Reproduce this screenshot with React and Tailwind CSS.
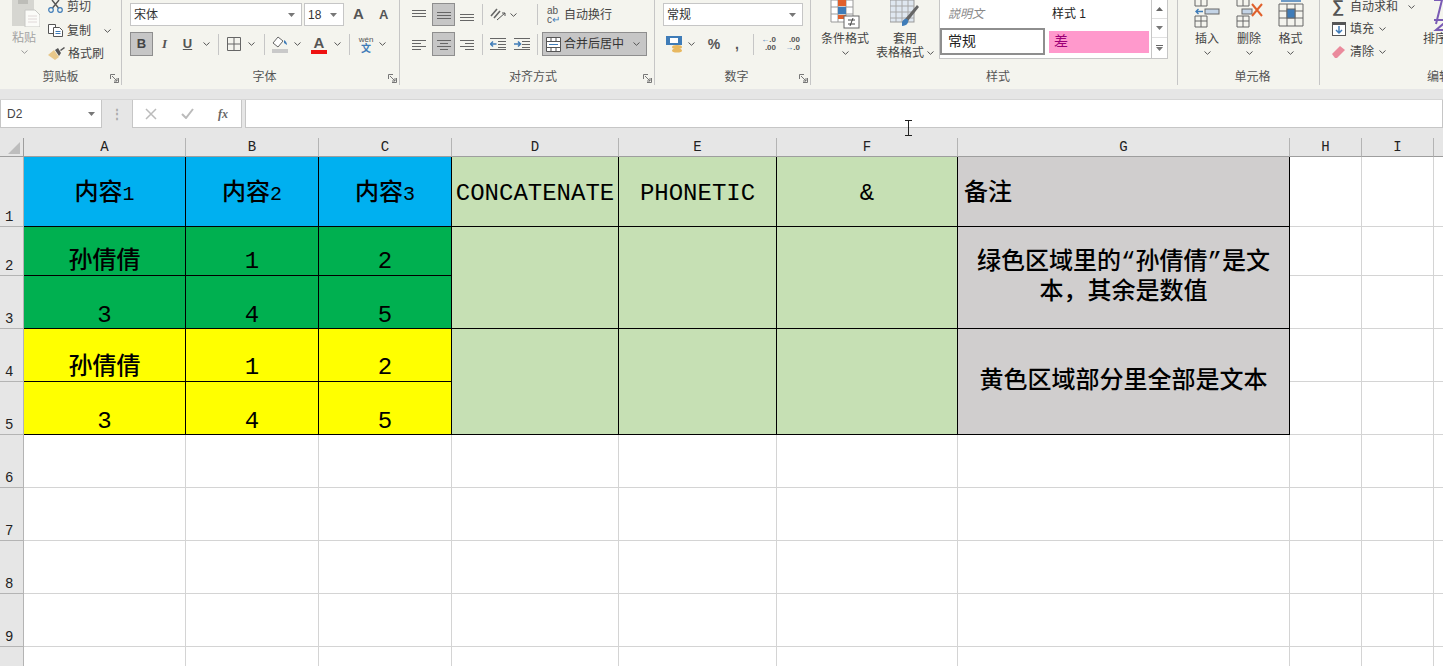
import React from "react";

// small drawn ribbon icons
const Chev = ({ c = "#555" }) => (
  <svg width="7" height="4" viewBox="0 0 7 4" fill="none"><path d="M.5.5 3.5 3.3 6.5.5" stroke={c} /></svg>
);
const Drop = () => (
  <svg width="7" height="4" viewBox="0 0 7 4"><path d="M0 0h7L3.5 4z" fill="#777" /></svg>
);
const Launcher = () => (
  <svg width="9" height="9" viewBox="0 0 9 9" fill="none" stroke="#777"><path d="M.5 5V.5H5M8.5 4v4.5H4M2 2l5 5M7 4v3H4" /></svg>
);
const Sep = () => <div className="w-px h-[21px] bg-[#c6c6c6] shrink-0" />;
const Lines = ({ rows }) => (
  <svg width="14" height="12" viewBox="0 0 14 12" stroke="#666" fill="none">
    {rows.map((r, i) => <path key={i} d={`M${r[0]} ${r[1]}.5H${r[2]}`} />)}
  </svg>
);

const Paste = () => (
  <svg width="28" height="27" viewBox="0 0 28 27">
    <rect x="0" y="0" width="22" height="26" fill="#d6d6d1" />
    <rect x="6" y="0" width="10" height="4" fill="#bdbdb8" />
    <path d="M13 10h10l5 5v12H13z" fill="#fbfbf8" stroke="#c8c8c4" />
    <path d="M16 16h9M16 19h9M16 22h9" stroke="#e0d8d8" />
  </svg>
);
const Scissors = () => (
  <svg width="15" height="13" viewBox="0 0 15 13" fill="none">
    <path d="M4.5 8 11 0M10.5 8 4 0" stroke="#555" strokeWidth="1.4" />
    <circle cx="3" cy="10" r="2.3" stroke="#3f7cb8" strokeWidth="1.2" />
    <circle cx="12" cy="10" r="2.3" stroke="#3f7cb8" strokeWidth="1.2" />
  </svg>
);
const CopyIcon = () => (
  <svg width="15" height="13" viewBox="0 0 15 13" fill="#fff" stroke="#555">
    <path d="M.5.5h7v9h-7z" />
    <path d="M5.5 3.5h6l3 3v6h-9z" />
    <path d="M7.5 7.5h5M7.5 9.5h5" stroke="#3f7cb8" />
  </svg>
);
const Brush = () => (
  <svg width="17" height="14" viewBox="0 0 17 14">
    <path d="M0 8 6 3l5 7-4 3z" fill="#e8c88a" />
    <path d="M7 3 10 1l3 5-2 3z" fill="#555" />
    <path d="M12 3l4-3 1 1-4 3z" fill="#555" />
  </svg>
);
const BorderIcon = () => (
  <svg width="14" height="14" viewBox="0 0 14 14" fill="none" stroke="#666"><path d="M.5.5h13v13H.5zM7 .5v13M.5 7h13" /></svg>
);
const FillIcon = () => (
  <svg width="17" height="17" viewBox="0 0 17 17">
    <path d="M6 1 1 7l5 4 5-6z" fill="#fff" stroke="#666" />
    <path d="M12 4c2 1 3 3 3 5l-3-2z" fill="#3f7cb8" />
    <rect x="0" y="13" width="16" height="4" fill="#c9c9c9" />
  </svg>
);
const ColorA = () => (
  <div className="flex flex-col items-center">
    <span className="text-[15px] leading-[15px] font-bold text-[#555]">A</span>
    <div className="w-[16px] h-[4px] bg-[#ee1111]" />
  </div>
);
const Wen = () => (
  <div className="flex flex-col items-center leading-none">
    <span className="text-[8px] leading-[9px] text-[#555]">wén</span>
    <span className="text-[10px] leading-[10px] text-[#3f7cb8] font-bold">文</span>
  </div>
);
const Orient = () => (
  <svg width="16" height="14" viewBox="0 0 16 14" fill="none" stroke="#666">
    <path d="M1 8 7 1M4 10l6-7" strokeWidth="1.6" />
    <path d="M7 12 15 5M15 5h-3M15 5v3" stroke="#555" />
  </svg>
);
const Indent = ({ flip }) => (
  <svg width="16" height="12" viewBox="0 0 16 12" fill="none">
    <path d="M0 .5h16M8 3.5h8M8 6.5h8M8 9.5h8M0 11.5h16" stroke="#666" />
    <path d={flip ? "M0 6h6M4 3.5 6.5 6 4 8.5" : "M6.5 6h-6M3 3.5.5 6 3 8.5"} stroke="#3f7cb8" strokeWidth="1.5" />
  </svg>
);
const Wrap = () => (
  <div className="flex flex-col leading-none text-[#555] w-[13px]">
    <span className="text-[10px] leading-[9px]">ab</span>
    <span className="text-[10px] leading-[9px]">c<span className="text-[#3f7cb8]">↵</span></span>
  </div>
);
const MergeIcon = () => (
  <svg width="15" height="15" viewBox="0 0 15 15" fill="#fff" stroke="#555">
    <path d="M.5.5h14v14H.5zM.5 4.5h14M.5 10.5h14M5 .5v4M10 .5v4M5 10.5v4M10 10.5v4" />
    <path d="M3 7.5h9" stroke="#3f7cb8" />
  </svg>
);
const Currency = () => (
  <svg width="17" height="17" viewBox="0 0 17 17">
    <rect x="0" y="0" width="16" height="9" fill="#3f7cb8" />
    <rect x="4" y="2" width="8" height="5" fill="#fff" />
    <ellipse cx="11" cy="11" rx="5" ry="2" fill="#e8b860" />
    <ellipse cx="11" cy="14.5" rx="5" ry="2" fill="#e8b860" />
  </svg>
);
const Decimal = ({ inc }) => (
  <div className="w-[16px] flex flex-col items-end text-[8px] leading-[8px] text-[#555] font-bold">
    <span>{inc ? <><span className="text-[#3f7cb8]">←</span>.0</> : ".00"}</span>
    <span>{inc ? ".00" : <><span className="text-[#3f7cb8]">→</span>.0</>}</span>
  </div>
);
const CondFormat = () => (
  <svg width="30" height="29" viewBox="0 0 30 29">
    <path d="M1 0h22v22H1z" fill="#fff" stroke="#999" />
    <path d="M8 0v22M16 0v22M1 7h22M1 14h22" stroke="#999" />
    <rect x="8" y="0" width="8" height="6" fill="#e0602c" />
    <rect x="8" y="7" width="8" height="7" fill="#3f7cb8" />
    <rect x="8" y="15" width="8" height="4" fill="#e0602c" />
    <rect x="14" y="16" width="15" height="12" fill="#fff" stroke="#666" />
    <path d="M18 20h7M18 24h7M20 26l3-8" stroke="#444" />
  </svg>
);
const TableFormat = () => (
  <svg width="30" height="30" viewBox="0 0 30 30">
    <rect x="0" y="0" width="24" height="22" fill="#dfe7f0" stroke="#999" />
    <path d="M6 0v22M12 0v22M18 0v22M0 6h24M0 12h24M0 18h24" stroke="#a8a8a8" />
    <path d="M29 7 18 21l-3-2L27 5z" fill="#666" />
    <path d="M12 22c2-4 5-4 6-2s-1 6-6 6z" fill="#3f7cb8" />
  </svg>
);
const InsertIcon = () => (
  <svg width="26" height="28" viewBox="0 0 26 28" fill="none" stroke="#666">
    <path d="M1 0v6h12V0M7 0v6M1 16h12v11H1zM7 16v11M1 21h12" />
    <rect x="11" y="9" width="14" height="5" fill="#c4d4e6" />
    <path d="M9 11.5H2M4.500 9 2 11.500 4.500 14" stroke="#3f7cb8" strokeWidth="1.400" />
  </svg>
);
const DeleteIcon = () => (
  <svg width="30" height="28" viewBox="0 0 30 28" fill="none" stroke="#666">
    <path d="M3 0v6h12V0M9 0v6M3 16h12v11H3zM9 16v11M3 21h12" />
    <rect x="8" y="9" width="10" height="5" fill="#c4d4e6" />
    <path d="M18 4l10 12M28 4 18 16" stroke="#e0602c" strokeWidth="2" />
  </svg>
);
const FormatIcon = () => (
  <svg width="26" height="28" viewBox="0 0 26 28" fill="none" stroke="#666">
    <path d="M1 4h24v22H1zM9 4v22M17 4v22M1 11h24M1 18h24" />
    <rect x="9" y="9" width="8" height="9" fill="#3f7cb8" />
    <path d="M3 1h20" stroke="#3f7cb8" strokeWidth="1.500" />
  </svg>
);
const FillDown = () => (
  <svg width="14" height="14" viewBox="0 0 14 14">
    <rect x=".5" y=".5" width="13" height="13" fill="#fff" stroke="#555" />
    <rect x="0" y="0" width="14" height="3" fill="#555" />
    <path d="M7 4v7M4 8l3 3 3-3" stroke="#3f7cb8" strokeWidth="1.500" fill="none" />
  </svg>
);
const Eraser = () => (
  <svg width="14" height="14" viewBox="0 0 14 14"><path d="M0 9 8 1l5 4-8 8H3z" fill="#ea8a9c" /></svg>
);

const Group = ({ className, label, launcher, children }) => (
  <div className={`shrink-0 h-[85px] flex flex-col border-r border-[#c6c6c6] ${className}`}>
    <div className="h-[69px]">{children}</div>
    <div className="h-[16px] relative flex items-center justify-center text-[12px] leading-none text-[#555]">
      {label}
      {launcher && <span className="absolute right-[2px] top-[5px] flex"><Launcher /></span>}
    </div>
  </div>
);

const BigButton = ({ className, icon, lines }) => (
  <div className={`shrink-0 flex flex-col items-center text-[12px] text-[#444] ${className}`}>
    <div className="h-[32px] flex items-start justify-center">{icon}</div>
    {lines}
  </div>
);
const ChevRow = () => <div className="h-[14px] flex items-center justify-center"><Chev /></div>;

const Clipboard = () => (
  <Group className="w-[122px]" label="剪贴板" launcher>
    <div className="flex">
      <div className="w-[48px] pl-[12px] flex flex-col text-[12px] text-[#a3a3a3]">
        <Paste />
        <span className="mt-[3px] leading-[16px]">粘贴</span>
        <div className="mt-[4px] pl-[9px] flex"><Chev c="#999" /></div>
      </div>
      <div className="flex flex-col text-[12px] text-[#444]">
        <div className="h-[13px] flex items-center gap-[4px]"><Scissors /><span className="ml-[0px]">剪切</span></div>
        <div className="mt-[11px] h-[13px] flex items-center gap-[4px]"><CopyIcon /><span>复制</span><span className="ml-[9px] flex"><Chev /></span></div>
        <div className="mt-[10px] h-[14px] flex items-center gap-[3px]"><Brush /><span>格式刷</span></div>
      </div>
    </div>
  </Group>
);

const Font = () => (
  <Group className="w-[278px] pl-[8px]" label="字体" launcher>
    <div className="pt-[3px] flex items-center h-[26px]">
      <div className="w-[172px] h-[23px] bg-white border border-[#c6c6c6] flex items-center justify-between pl-[3px] pr-[6px] text-[12px] text-[#333]">宋体<Drop /></div>
      <div className="ml-[2px] w-[40px] h-[23px] bg-white border border-[#c6c6c6] flex items-center justify-between pl-[3px] pr-[6px] text-[12px] text-[#333]">18<Drop /></div>
      <span className="ml-[9px] w-[14px] text-[15px] text-[#555] font-bold">A</span>
      <span className="ml-[12px] w-[13px] text-[13px] text-[#555] font-bold">A</span>
    </div>
    <div className="mt-[6px] flex items-center h-[24px]">
      <div className="w-[23px] h-[24px] bg-[#c6c6c6] border border-[#8e8e8e] flex items-center justify-center text-[13px] font-bold text-[#444]">B</div>
      <div className="w-[23px] text-center text-[13px] italic font-bold [font-family:'Liberation_Serif',serif] text-[#555]">I</div>
      <div className="w-[23px] text-center text-[13px] font-bold text-[#555] underline">U</div>
      <div className="w-[15px] flex justify-center"><Chev /></div>
      <div className="ml-[4px] flex"><Sep /></div>
      <div className="ml-[8px] flex"><BorderIcon /></div>
      <div className="ml-[3px] w-[14px] flex justify-center"><Chev /></div>
      <div className="ml-[6px] flex"><Sep /></div>
      <div className="ml-[7px] flex"><FillIcon /></div>
      <div className="ml-[1px] w-[14px] flex justify-center"><Chev /></div>
      <div className="ml-[6px] w-[18px] flex justify-center"><ColorA /></div>
      <div className="ml-[2px] w-[14px] flex justify-center"><Chev /></div>
      <div className="ml-[5px] flex"><Sep /></div>
      <div className="ml-[7px] w-[18px] flex justify-center"><Wen /></div>
      <div className="w-[14px] flex justify-center"><Chev /></div>
    </div>
  </Group>
);

const Align = () => (
  <Group className="w-[255px] pl-[12px]" label="对齐方式" launcher>
    <div className="pt-[3px] flex items-center h-[26px]">
      <div className="w-[14px] flex"><Lines rows={[[0, 1, 14], [0, 4, 14], [0, 7, 14]]} /></div>
      <div className="ml-[6px] w-[23px] h-[23px] bg-[#c6c6c6] border border-[#8e8e8e] flex items-center justify-center"><Lines rows={[[0, 3, 14], [0, 6, 14], [0, 9, 14]]} /></div>
      <div className="ml-[5px] w-[14px] flex"><Lines rows={[[0, 5, 14], [0, 8, 14], [0, 11, 14]]} /></div>
      <div className="ml-[8px] flex"><Sep /></div>
      <div className="ml-[7px] flex"><Orient /></div>
      <div className="w-[14px] flex justify-center"><Chev /></div>
      <div className="ml-[17px] flex"><Sep /></div>
      <div className="ml-[9px] flex"><Wrap /></div>
      <span className="ml-[4px] text-[12px] text-[#444]">自动换行</span>
    </div>
    <div className="mt-[6px] flex items-center h-[24px]">
      <div className="w-[14px] flex"><Lines rows={[[0, 2, 14], [0, 5, 9], [0, 8, 14], [0, 11, 9]]} /></div>
      <div className="ml-[6px] w-[23px] h-[24px] bg-[#c6c6c6] border border-[#8e8e8e] flex items-center justify-center"><Lines rows={[[0, 2, 14], [3, 5, 11], [0, 8, 14], [3, 11, 11]]} /></div>
      <div className="ml-[5px] w-[14px] flex"><Lines rows={[[0, 2, 14], [5, 5, 14], [0, 8, 14], [5, 11, 14]]} /></div>
      <div className="ml-[8px] flex"><Sep /></div>
      <div className="ml-[7px] flex"><Indent /></div>
      <div className="ml-[8px] flex"><Indent flip /></div>
      <div className="ml-[7px] flex"><Sep /></div>
      <div className="ml-[4px] w-[105px] h-[24px] bg-[#c6c6c6] border border-[#8e8e8e] flex items-center pl-[3px] text-[12px] text-[#333]">
        <MergeIcon />
        <span className="ml-[3px]">合并后居中</span>
        <span className="ml-[9px] flex"><Chev /></span>
      </div>
    </div>
  </Group>
);

const NumberGroup = () => (
  <Group className="w-[156px] pl-[8px]" label="数字" launcher>
    <div className="pt-[3px] flex items-center h-[26px]">
      <div className="w-[140px] h-[23px] bg-white border border-[#c6c6c6] flex items-center justify-between pl-[3px] pr-[6px] text-[12px] text-[#333]">常规<Drop /></div>
    </div>
    <div className="mt-[6px] pl-[3px] flex items-center h-[24px]">
      <Currency />
      <div className="ml-[1px] w-[14px] flex justify-center"><Chev /></div>
      <span className="ml-[9px] w-[14px] text-[14px] font-bold text-[#555] text-center">%</span>
      <span className="ml-[10px] w-[12px] text-[14px] font-bold text-[#555] text-center">,</span>
      <div className="ml-[10px] flex"><Sep /></div>
      <div className="ml-[6px] flex"><Decimal inc /></div>
      <div className="ml-[8px] flex"><Decimal /></div>
    </div>
  </Group>
);

const Styles = () => (
  <Group className="w-[367px] pl-[8px]" label="样式">
    <div className="flex">
      <BigButton className="w-[52px] leading-[14px]" icon={<CondFormat />} lines={<><span>条件格式</span><ChevRow /></>} />
      <BigButton className="ml-[1px] w-[66px] leading-[14px]" icon={<TableFormat />} lines={
        <><span>套用</span><span className="flex items-center gap-[3px] whitespace-nowrap">表格格式<Chev /></span></>
      } />
      <div className="ml-[1px] w-[229px] h-[59px] bg-white border-x border-b border-[#c6c6c6] flex text-[12px]">
        <div className="w-[212px] flex flex-col">
          <div className="h-[28px] flex items-center">
            <span className="pl-[8px] w-[112px] italic text-[#888]">説明文</span>
            <span className="text-[#222]">样式 1</span>
          </div>
          <div className="flex items-center">
            <div className="w-[105px] h-[27px] border-2 border-[#8e8e8e] flex items-center pl-[6px] text-[14px] text-[#222]">常规</div>
            <div className="ml-[4px] w-[100px] h-[22px] bg-[#ff99cc] flex items-center pl-[5px] text-[14px] text-[#9c0077]">差</div>
          </div>
        </div>
        <div className="ml-[1px] w-[16px] border-l border-[#c6c6c6] flex flex-col text-[#666]">
          <div className="h-[19px] border-b border-[#e0e0e0] flex items-center justify-center"><svg width="7" height="4" viewBox="0 0 7 4"><path d="M0 4h7L3.500 0z" fill="#666" /></svg></div>
          <div className="h-[19px] border-b border-[#e0e0e0] flex items-center justify-center"><Drop /></div>
          <div className="h-[19px] flex flex-col items-center justify-center gap-[1px]"><div className="w-[7px] h-px bg-[#666]" /><Drop /></div>
        </div>
      </div>
    </div>
  </Group>
);

const Cells = () => (
  <Group className="w-[142px] pl-[8px]" label="单元格">
    <div className="flex">
      <BigButton className="w-[42px] leading-[14px]" icon={<InsertIcon />} lines={<><span>插入</span><ChevRow /></>} />
      <BigButton className="w-[42px] leading-[14px]" icon={<DeleteIcon />} lines={<><span>删除</span><ChevRow /></>} />
      <BigButton className="w-[41px] leading-[14px]" icon={<FormatIcon />} lines={<><span>格式</span><ChevRow /></>} />
    </div>
  </Group>
);

const Editing = () => (
  <div className="shrink-0 w-[238px] h-[85px] flex flex-col">
    <div className="h-[69px] flex pl-[12px] text-[12px] text-[#444]">
      <div className="w-[91px] flex flex-col">
        <div className="h-[13px] flex items-center gap-[4px]"><span className="w-[14px] text-[17px] leading-none font-bold text-[#555]">∑</span><span>自动求和</span><span className="ml-[6px] flex"><Chev /></span></div>
        <div className="mt-[9px] h-[14px] flex items-center gap-[4px]"><FillDown /><span>填充</span><span className="ml-[1px] flex"><Chev /></span></div>
        <div className="mt-[9px] h-[14px] flex items-center gap-[4px]"><Eraser /><span>清除</span><span className="ml-[1px] flex"><Chev /></span></div>
      </div>
      <div className="flex flex-col">
        <svg width="22" height="32" viewBox="0 0 22 32" className="ml-[5px]">
          <path d="M6 0h8l-6 24" stroke="#7a5bb5" strokeWidth="2" fill="none" />
          <path d="M6 20h14L8 30h12" stroke="#7a5bb5" strokeWidth="2" fill="none" />
        </svg>
        <span className="leading-[14px] whitespace-nowrap">排序和筛选</span>
      </div>
    </div>
    <div className="h-[16px] flex items-center justify-center text-[12px] leading-none text-[#555]">编辑</div>
  </div>
);

const Ribbon = () => (
  <div className="h-[89px] bg-[#f4f4ee] flex overflow-hidden">
    <Clipboard />
    <Font />
    <Align />
    <NumberGroup />
    <Styles />
    <Cells />
    <Editing />
  </div>
);

const FormulaBar = () => (
  <div className="h-[39px] flex items-start border-t border-[#d6d6d6] mt-[10px]">
    <div className="w-[102px] h-[28px] bg-white border border-[#c6c6c6] border-t-0 flex items-center justify-between pl-[6px] pr-[6px] text-[12px] text-[#444]">D2<Drop /></div>
    <div className="w-[30px] h-[28px] flex items-center justify-center text-[#aaa] text-[12px] font-bold leading-none">⋮</div>
    <div className="w-[110px] h-[28px] bg-white border border-[#c6c6c6] border-t-0 flex items-center">
      <div className="w-[36px] flex justify-center"><svg width="12" height="12" viewBox="0 0 12 12" stroke="#bbb" strokeWidth="1.500"><path d="M1 1l10 10M11 1 1 11" /></svg></div>
      <div className="w-[36px] flex justify-center"><svg width="13" height="11" viewBox="0 0 13 11" stroke="#bbb" strokeWidth="2" fill="none"><path d="M1 6l4 4 7-9" /></svg></div>
      <div className="w-[36px] text-center text-[12px] italic font-bold [font-family:'Liberation_Serif',serif] text-[#666]">fx</div>
    </div>
    <div className="ml-[3px] flex-1 h-[28px] bg-white border border-[#c6c6c6] border-t-0" />
  </div>
);

const columns = ["A", "B", "C", "D", "E", "F", "G", "H", "I"];
const green = "bg-[#00b050] border-black";
const yellow = "bg-[#ffff00] border-black";
const blue = "bg-[#00b0f0] border-black";
const pale = "bg-[#c6e0b4] border-black";
const gray = "bg-[#d0cece] border-black";

const Cell = ({ className = "border-[#d4d4d4]", children }) => (
  <div className={`border-r border-b flex justify-center text-[24px] text-black ${className}`}>{children}</div>
);
const RowHead = ({ n }) => (
  <div className="bg-[#e6e6e6] border-r border-b border-[#b4b4b4] flex items-end pl-[5px] text-[14px] leading-[18px] text-[#222]">{n}</div>
);
const Blank = () => <Cell />;
const Digit = ({ children }) => <span className="text-[20px]">{children}</span>;

const Sheet = () => (
  <div className="grid grid-cols-[24px_162px_133px_133px_167px_158px_181px_332px_72px_72px_72px] grid-rows-[19px_70px_49px_53px_53px_53px_53px_53px_53px_53px_53px] [font-family:'Liberation_Mono','Noto_Sans_CJK_SC',monospace] font-medium leading-none">
    <div className="bg-[#e6e6e6] border-r border-b border-[#9e9e9e] flex items-end justify-end pr-[3px] pb-[2px]">
      <svg width="12" height="12" viewBox="0 0 12 12"><path d="M12 0v12H0z" fill="#bdbdbd" /></svg>
    </div>
    {columns.map((c) => (
      <div key={c} className="bg-[#e6e6e6] border-r border-b border-b-[#9e9e9e] border-r-[#b4b4b4] flex items-end justify-center text-[14px] font-normal leading-[18px] text-[#222]">{c}</div>
    ))}
    <div className="bg-[#e6e6e6] border-b border-[#9e9e9e]" />

    {/* row 1 */}
    <RowHead n="1" />
    <Cell className={`${blue} items-center pt-[4px]`}><span>内容<Digit>1</Digit></span></Cell>
    <Cell className={`${blue} items-center pt-[4px]`}><span>内容<Digit>2</Digit></span></Cell>
    <Cell className={`${blue} items-center pt-[4px]`}><span>内容<Digit>3</Digit></span></Cell>
    <Cell className={`${pale} items-center pt-[4px] text-[22px]`}>CONCATENATE</Cell>
    <Cell className={`${pale} items-center pt-[4px] text-[22px]`}>PHONETIC</Cell>
    <Cell className={`${pale} items-center pt-[4px] text-[22px]`}>&amp;</Cell>
    <Cell className={`${gray} items-center justify-start pl-[6px] pt-[4px]`}>备注</Cell>
    <Blank /><Blank /><Blank />

    {/* row 2 */}
    <RowHead n="2" />
    <Cell className={`${green} items-end pb-[1px]`}>孙倩倩</Cell>
    <Cell className={`${green} items-end pb-[1px]`}>1</Cell>
    <Cell className={`${green} items-end pb-[1px]`}>2</Cell>
    <Cell className={`${pale} row-span-2`} />
    <Cell className={`${pale} row-span-2`} />
    <Cell className={`${pale} row-span-2`} />
    <Cell className={`${gray} row-span-2 items-center text-center px-[14px] leading-[30px]`}>绿色区域里的“孙倩倩”是文本，其余是数值</Cell>
    <Blank /><Blank /><Blank />

    {/* row 3 */}
    <RowHead n="3" />
    <Cell className={`${green} items-end`}>3</Cell>
    <Cell className={`${green} items-end`}>4</Cell>
    <Cell className={`${green} items-end`}>5</Cell>
    <Blank /><Blank /><Blank />

    {/* row 4 */}
    <RowHead n="4" />
    <Cell className={`${yellow} items-end pb-[1px]`}>孙倩倩</Cell>
    <Cell className={`${yellow} items-end pb-[1px]`}>1</Cell>
    <Cell className={`${yellow} items-end pb-[1px]`}>2</Cell>
    <Cell className={`${pale} row-span-2`} />
    <Cell className={`${pale} row-span-2`} />
    <Cell className={`${pale} row-span-2`} />
    <Cell className={`${gray} row-span-2 items-center`}>黄色区域部分里全部是文本</Cell>
    <Blank /><Blank /><Blank />

    {/* row 5 */}
    <RowHead n="5" />
    <Cell className={`${yellow} items-end`}>3</Cell>
    <Cell className={`${yellow} items-end`}>4</Cell>
    <Cell className={`${yellow} items-end`}>5</Cell>
    <Blank /><Blank /><Blank />

    {[6, 7, 8, 9, 10].map((n) => (
      <React.Fragment key={n}>
        <RowHead n={n} />
        {columns.map((c) => <Blank key={c} />)}
        <Blank />
      </React.Fragment>
    ))}
  </div>
);

export default function App() {
  return (
    <div className="relative w-[1443px] h-[666px] overflow-hidden bg-[#e6e6e6] [font-family:'Liberation_Sans','Noto_Sans_CJK_SC',sans-serif]">
      <Ribbon />
      <FormulaBar />
      <div className="bg-white"><Sheet /></div>
      {/* text cursor over the sheet */}
      <svg className="absolute left-[904px] top-[120px]" width="9" height="16" viewBox="0 0 9 16" fill="none" stroke="#222">
        <path d="M1 .5h7M4.500 .5v15M1 15.500h7" />
      </svg>
    </div>
  );
}
